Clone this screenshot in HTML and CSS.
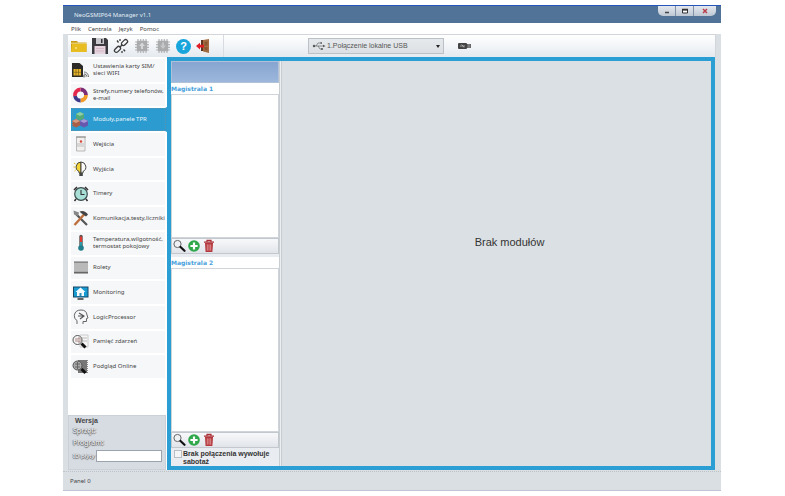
FILE: index.html
```html
<!DOCTYPE html>
<html lang="pl">
<head>
<meta charset="utf-8">
<title>NeoGSMIP64 Manager v1.1</title>
<link rel="stylesheet" href="styles.css">
</head>
<body>
<svg class="defs" aria-hidden="true">
  <symbol id="search" viewBox="0 0 14 14"><circle cx="5.5" cy="5" r="3.6" fill="#eef2f5" stroke="#666" stroke-width="1"/><path d="M8.5 8l4 3.8" stroke="#111" stroke-width="2.2" stroke-linecap="round"/></symbol>
  <symbol id="add" viewBox="0 0 14 14"><circle cx="7" cy="7" r="5.8" fill="#2fa84a"/><path d="M7 3.4v7.2M3.4 7h7.2" stroke="#fff" stroke-width="2.2"/></symbol>
  <symbol id="trash" viewBox="0 0 14 14"><path d="M3 4h8l-.6 9H3.6z" fill="#b5363c"/><path d="M2 3.2h10M5 2.6V1.4h4v1.2" fill="none" stroke="#a92e35" stroke-width="1.2"/><path d="M5.3 5.3v6.4M7 5.3v6.4M8.7 5.3v6.4" stroke="#e9b4b4" stroke-width=".7"/></symbol>
  <symbol id="chip" viewBox="0 0 16 16"><path d="M4 1v14M6.7 1v14M9.3 1v14M12 1v14M1 4h14M1 6.7h14M1 9.3h14M1 12h14" stroke="#b4b5b7" stroke-width="1.2"/><rect x="2.8" y="2.8" width="10.4" height="10.4" rx="1" fill="#aaabad"/></symbol>
</svg>
<div class="window">
  <header class="titlebar">
    <h1>NeoGSMIP64 Manager v1.1</h1>
    <div class="caption">
      <button aria-label="Minimalizuj"><svg viewBox="0 0 12 8"><path d="M4 5.5h4" stroke="#444" stroke-width="1.4"/></svg></button>
      <button aria-label="Maksymalizuj"><svg viewBox="0 0 12 8"><path d="M3.5 3h5v3h-5z" fill="#fff" stroke="#333"/><path d="M3 2.5h6" stroke="#333" stroke-width="1.4"/></svg></button>
      <button aria-label="Zamknij"><svg viewBox="0 0 12 8"><path d="M4 2l4 4M8 2L4 6" stroke="#b8404c" stroke-width="1.5"/></svg></button>
    </div>
  </header>
  <nav class="menu"><a href="#">Plik</a><a href="#">Centrala</a><a href="#">Język</a><a href="#">Pomoc</a></nav>
  <div class="toolbar">
    <div class="tools">
      <button aria-label="Otwórz"><svg viewBox="0 0 16 16"><path d="M0 3h6l1 1.5h8.5V14H0z" fill="#c79a17"/><path d="M1 6h14.5v8H0z" fill="#e7bd22"/><path d="M0 5.2h15.5" stroke="#fff1b0" stroke-width=".8"/><path d="M5 9v2" stroke="#fff3b8"/></svg></button>
      <button aria-label="Zapisz"><svg viewBox="0 0 16 16"><path d="M0 0h14l2 2v14H0z" fill="#3b3a3f"/><path d="M4 0h8v6H4z" fill="#c9c9cd"/><path d="M9 1h1.500v4H9z" fill="#333"/><path d="M2.500 8h11v8h-11z" fill="#e6d3dd"/><path d="M4 10.500h8M4 13h8" stroke="#c4afbb" stroke-width=".7"/></svg></button>
      <button aria-label="Połącz"><svg viewBox="0 0 16 16"><g fill="none" stroke="#3b3b3b" stroke-width="1.3"><rect x="8" y="2.7" width="7" height="3.8" rx="1.9" transform="rotate(-45 11.5 4.6)"/><rect x="1" y="9.5" width="7" height="3.8" rx="1.9" transform="rotate(-45 4.5 11.4)"/><path d="M6.7 9.3l2.6-2.6M4 2.500L5.500 4.500M7 1v2M10.500 11.500l1.600 1.700M9 13v2"/></g></svg></button>
      <button aria-label="Wyślij do centrali"><svg><use href="#chip"/></svg><svg class="over" viewBox="0 0 16 16"><path d="M8 4.500l3 3.500H9v3H7V8H5z" fill="#d6d7d8"/></svg></button>
      <button aria-label="Odczytaj z centrali"><svg><use href="#chip"/></svg><svg class="over" viewBox="0 0 16 16"><path d="M8 11L5 7.500h2v-3h2v3h2z" fill="#c6c7c8"/></svg></button>
      <button class="help" aria-label="Pomoc">?</button>
      <button aria-label="Wyjście"><svg viewBox="0 0 16 16"><path d="M5 2h8v11H5z" fill="#5c341f"/><path d="M7 2l6-1v14l-6-1.500z" fill="#a56d43"/><path d="M8.500 4l3-.5v4l-3 .2zM8.500 9l3 .2v3.400l-3-.6z" fill="#8a5632"/><path d="M0 8l4-3.200v2h4v2.600H4v2z" fill="#e01e25"/></svg></button>
    </div>
    <label class="connection">
      <svg viewBox="0 0 14 10"><path d="M1 5h11M4 5l2-3h3M6 5l2 3h2" fill="none" stroke="#666" stroke-width=".7"/><circle cx="2" cy="5" r="1.2" fill="#555"/><path d="M11 3.800L13.500 5 11 6.200z" fill="#555"/><path d="M8.500 1.200H10v1.600H8.500z" fill="#555"/><circle cx="10" cy="8" r="1" fill="#555"/></svg>
      <select aria-label="Połączenie"><option>1.Połączenie lokalne USB</option></select>
    </label>
    <svg class="plug" viewBox="0 0 14 8"><rect x="0" y="1" width="9" height="6" rx="1" fill="#444"/><path d="M2 4h5M3.500 2.500L5 4 6 5.500" stroke="#ccc" stroke-width=".7" fill="none"/><path d="M9 2h4v4H9z" fill="#666"/><path d="M10.500 3h1M10.500 5h1" stroke="#ddd" stroke-width=".7"/></svg>
  </div>
  <main class="main">
    <aside class="side">
      <nav class="items">
        <a href="#"><svg viewBox="0 0 18 18"><path d="M1 2h7.500L12 5v11H1z" fill="#2d2b28"/><rect x="2.500" y="8" width="7.500" height="6.500" fill="#e6b52a"/><path d="M5 8v6.500M7.500 8v6.500M2.500 11.300H10" stroke="#68501a" stroke-width=".6"/><path d="M13 16a1 1 0 1 1 .1 0M13 12.800q2.500 0 3 3M13 11q4 0 4.600 5" fill="none" stroke="#555" stroke-width=".8"/></svg><span>Ustawienia karty SIM/<br>sieci WIFI</span></a>
        <a href="#"><svg viewBox="0 0 18 18"><g fill="none" stroke-width="3.800"><path d="M9.500 3.500A5.500 5.500 0 0 1 15 9" stroke="#7a2d74"/><path d="M15 9a5.500 5.500 0 0 1-5.500 5.500" stroke="#f39b27"/><path d="M9.500 14.500A5.500 5.500 0 0 1 4 10" stroke="#3e3b8d"/><path d="M4 10a5.500 5.500 0 0 1 5.500-6.500" stroke="#e5294e"/></g></svg><span>Strefy,numery telefonów,<br>e-mail</span></a>
        <a href="#" class="active" aria-current="page"><svg viewBox="0 0 18 18"><path d="M9 1l4 2v4.500L9 9.500 5 7.500V3z" fill="#55a878"/><path d="M9 1l4 2-4 2-4-2z" fill="#8cd0a4"/><path d="M5 8l4 2v4.500l-4 2-4-2V10z" fill="#a95f47"/><path d="M5 8l4 2-4 2-4-2z" fill="#d69b80"/><path d="M13 8l4 2v4.500l-4 2-4-2V10z" fill="#6757ad"/><path d="M13 8l4 2-4 2-4-2z" fill="#a69ad9"/></svg><span>Moduły,panele TPR</span></a>
        <a href="#"><svg viewBox="0 0 18 18"><path d="M5.500 2H14v14H5.500z" fill="#f2f0ee" stroke="#aaa" stroke-width=".8"/><path d="M6 8h8v4H6z" fill="#d7d7d7"/><circle cx="10" cy="6.500" r="1.200" fill="#d3443c"/><path d="M5 2h10" stroke="#888"/></svg><span>Wejścia</span></a>
        <a href="#"><svg viewBox="0 0 18 18"><path d="M10 2a5 5 0 0 0-2 9.500V13h2z" fill="#f4d737" stroke="#333" stroke-width=".9"/><path d="M10 2a5 5 0 0 1 2 9.500V13h-2z" fill="#fafafa" stroke="#333" stroke-width=".9"/><path d="M8.300 13h3.500v3H8.300z" fill="#444"/><path d="M3 3l1.500 1M2.500 7h1.800M3.500 11l1.300-1" stroke="#e2c02b"/></svg><span>Wyjścia</span></a>
        <a href="#"><svg viewBox="0 0 18 18"><path d="M5 14l-1.500 2M15 14l1.500 2M3 5L6 2M17 5L14 2" stroke="#333" stroke-width="1.600"/><circle cx="10" cy="9" r="6.300" fill="#a8dfd7" stroke="#3b4b4b" stroke-width="1.200"/><path d="M10 5v4.500h3.500" fill="none" stroke="#333" stroke-width="1.100"/></svg><span>Timery</span></a>
        <a href="#"><svg viewBox="0 0 18 18"><path d="M5 5l11 11" stroke="#555" stroke-width="2.200"/><path d="M2.500 1.500l.5 4L7 7l1-3.500z" fill="#888"/><path d="M13.500 5L3.500 16" stroke="#bd6f3e" stroke-width="2.400"/><path d="M8.500 2.500q5-2 8.500 3l-2 2L10 4z" fill="#444"/></svg><span>Komunikacja,testy,liczniki</span></a>
        <a href="#"><svg viewBox="0 0 18 18"><path d="M10 2.500v11" stroke="#555" stroke-width="3.400" stroke-linecap="round"/><path d="M10 2.500v5.500" stroke="#df3a31" stroke-width="2.200"/><path d="M10 8v6" stroke="#2f9baa" stroke-width="2.200"/><circle cx="10" cy="14" r="2.800" fill="#207d8b"/></svg><span>Temperatura,wilgotność,<br>termostat pokojowy</span></a>
        <a href="#"><svg viewBox="0 0 18 18"><path d="M3 3h14v12H3z" fill="#aaa"/><path d="M3 5h14M3 7h14M3 9h14M3 11h14" stroke="#c8c8c8"/><path d="M3 3h14M3 13.500h14" stroke="#666"/></svg><span>Rolety</span></a>
        <a href="#"><svg viewBox="0 0 18 18"><path d="M2 2.500h15.500v11H2z" fill="#174666"/><path d="M3 3.500h13.500v9H3z" fill="#189bd1"/><path d="M9.500 3.500l-5 4.500H6v4h7V8h1.500z" fill="#f3fbff"/><path d="M8.500 9h2v3h-2z" fill="#2e8fbd"/><path d="M6.500 15h6" stroke="#333" stroke-width="1.500"/></svg><span>Monitoring</span></a>
        <a href="#"><svg viewBox="0 0 18 18"><path d="M6 16v-3.500Q3 11 3.300 7.500 4 2 10 2q5.500 0 6 5l1 3-1.500.5v3H12V16" fill="none" stroke="#666"/><path d="M8 5l5 3-4 3M7 8h5" fill="none" stroke="#555" stroke-width="1.100"/></svg><span>LogicProcessor</span></a>
        <a href="#"><svg viewBox="0 0 18 18"><path d="M9 2h8v12H9z" fill="#f5f5f5" stroke="#ccc"/><path d="M11 5h5M11 8h5" stroke="#bbb"/><circle cx="6.500" cy="7" r="4.500" fill="#f5f5f5" stroke="#555"/><path d="M5 5v4M7 5h2v4H7z" fill="none" stroke="#a88"/><path d="M10.500 10.500l4 4" stroke="#111" stroke-width="3"/></svg><span>Pamięć zdarzeń</span></a>
        <a href="#"><svg viewBox="0 0 18 18"><path d="M7 2h9v13H7z" fill="#777"/><path d="M16.500 2v13" stroke="#888" stroke-dasharray="1 1"/><circle cx="6.500" cy="7.500" r="4.500" fill="#aaa" stroke="#555"/><path d="M4 6h5M4 9h5M6.500 4v7" stroke="#666"/><path d="M10.500 11l4 4" stroke="#111" stroke-width="3"/></svg><span>Podgląd Online</span></a>
      </nav>
      <section class="version">
        <h2>Wersja</h2>
        <p>Sprzęt:</p>
        <p>Program:</p>
        <div class="board"><label for="board">ID płyty</label><input id="board" type="text"></div>
      </section>
    </aside>
    <section class="frame">
      <div class="buses">
        <div class="head"></div>
        <h2>Magistrala 1</h2>
        <div class="list"></div>
        <div class="actions"><button aria-label="Szukaj"><svg><use href="#search"/></svg></button><button aria-label="Dodaj"><svg><use href="#add"/></svg></button><button aria-label="Usuń"><svg><use href="#trash"/></svg></button></div>
        <h2 class="second">Magistrala 2</h2>
        <div class="list tall"></div>
        <div class="actions"><button aria-label="Szukaj"><svg><use href="#search"/></svg></button><button aria-label="Dodaj"><svg><use href="#add"/></svg></button><button aria-label="Usuń"><svg><use href="#trash"/></svg></button></div>
        <label class="sabotage"><input type="checkbox"><span>Brak połączenia wywołuje sabotaż</span></label>
      </div>
      <div class="splitter"></div>
      <div class="content">Brak modułów</div>
    </section>
  </main>
  <footer class="status">Panel 0</footer>
</div>
</body>
</html>
```
FILE: styles.css
```css
* { box-sizing: border-box; }
body {
  margin: 0;
  height: 100vh;
  padding: 5px 64px 5px 63px;
  background: #fff;
  color: #444;
  font: 6px/8px "Noto Sans", sans-serif;
}
h1, h2, p { margin: 0; font-size: inherit; font-weight: normal; }
button { padding: 0; border: 0; background: none; position: relative; }
a { color: inherit; text-decoration: none; }
.defs { position: absolute; width: 0; height: 0; }
.window {
  height: 100%;
  display: flex;
  flex-direction: column;
  background: #dadfe4;
  border-bottom: 1px solid #c0c4d6;
}
.titlebar {
  flex: 0 0 18px;
  display: flex;
  justify-content: space-between;
  padding: 0 5px 0 11px;
  background: #507397;
  border-top: 1px solid #2455b8;
  color: #e4edf5;
}
.titlebar h1 { align-self: center; }
.caption {
  display: flex;
  height: 10px;
  border-radius: 0 0 5px 5px;
  background: linear-gradient(#e4e8ee, #bdc7d3);
  overflow: hidden;
}
.caption button { width: 18px; border-right: 1px solid #8292a6; }
.caption button:last-child { width: 22px; border: 0; }
.caption svg { width: 12px; height: 8px; display: block; margin: auto; }
.menu {
  flex: 0 0 11px;
  display: flex;
  align-items: center;
  gap: 7px;
  padding-left: 8px;
  background: #fff;
}
.toolbar {
  flex: 0 0 23px;
  display: flex;
  align-items: center;
  margin: 0 5px;
  background: linear-gradient(#fff, #e5eaf0);
  border: 1px solid #d2d6da;
  border-width: 1px 1px 0 0;
}
.tools {
  flex: 0 0 156px;
  height: 100%;
  display: flex;
  align-items: center;
  gap: 5px;
  padding-left: 3px;
  border-right: 1px solid #d8dce0;
}
.tools button { width: 16px; height: 16px; }
.tools svg { display: block; width: 16px; height: 16px; }
.tools .over { position: absolute; inset: 0; }
.tools .help {
  width: 15px;
  height: 15px;
  border-radius: 50%;
  background: #18a5dc;
  color: #fff;
  font: bold 11px/15px "Liberation Sans", sans-serif;
}
.connection {
  display: flex;
  align-items: center;
  gap: 1px;
  width: 136px;
  height: 16px;
  margin-left: 84px;
  padding-left: 3px;
  border: 1px solid #bcc1c7;
  background: linear-gradient(#e6e9ec, #dce0e4);
  position: relative;
}
.connection svg { width: 14px; height: 10px; }
.connection select {
  flex: 1;
  appearance: none;
  border: 0;
  padding: 0;
  background: none;
  color: #555;
  font: 7px/12px "Liberation Sans", sans-serif;
}
.connection::after {
  content: "";
  position: absolute;
  right: 3px;
  top: 6px;
  border: 2px solid transparent;
  border-top: 3px solid #222;
}
.plug { width: 14px; height: 8px; margin-left: 14px; }
.main { flex: 1; display: flex; min-height: 0; margin: 0 6px 0 5px; }
.side {
  flex: 0 0 99px;
  min-width: 0;
  display: flex;
  flex-direction: column;
  background: #fff;
}
.items {
  flex: 1;
  display: grid;
  grid-template-rows: repeat(13, 1fr);
  padding: 1px 0 36px 3px;
}
.items a {
  display: flex;
  align-items: center;
  gap: 4px;
  min-width: 0;
  overflow: hidden;
  background: #f6f7f9;
  border: 1px solid #fff;
  border-width: 1px 2px 1px 0;
  line-height: 7px;
  white-space: nowrap;
}
.items svg { flex: none; width: 18px; height: 18px; }
.items .active {
  background: #2b9bd0;
  color: #e6f4fb;
  border-right-color: #2b9bd0;
  outline: 1px dotted #5a94b3;
  outline-offset: -2px;
}
.version {
  flex: 0 0 55px;
  margin-right: 1px;
  padding: 1px 3px 0 4px;
  background: #d7dce3;
  border: 1px solid #c9d0d7;
  font-size: 7px;
}
.version h2 { padding-left: 2px; font: bold 7px/8px "Liberation Sans", sans-serif; }
.version p, .board label {
  color: #f3f5f7;
  text-shadow: 0 1px 1px #555, 1px 0 1px #777, -1px 0 1px #888;
}
.version p { line-height: 12px; }
.board { display: flex; align-items: center; margin-top: 1px; }
.board label { flex: 0 0 23px; white-space: nowrap; font-size: 6px; }
.board input {
  flex: 1;
  min-width: 0;
  height: 12px;
  padding: 0 2px;
  border: 1px solid #9ca4ad;
  background: #fff;
  font-size: 7px;
}
.frame { flex: 1; min-width: 0; display: flex; border: 4px solid #2b9fd4; background: #dbe0e4; }
.buses { flex: 0 0 108px; display: flex; flex-direction: column; background: #e9ecf0; }
.head { flex: 0 0 22px; background: linear-gradient(#86a5d0, #9db7dc); border: 1px solid #b0c1d8; }
.buses h2 {
  flex: 0 0 11px;
  background: #fff;
  color: #46a0dc;
  font: bold 6px/11px "DejaVu Sans", sans-serif;
}
.buses .second { margin-top: 3px; }
.list { flex: 145; background: #fff; border: 1px solid #d0d5db; }
.tall { flex: 165; }
.actions {
  flex: 0 0 15px;
  display: flex;
  align-items: center;
  gap: 1px;
  background: linear-gradient(#f7f8fa, #e1e5ea);
  border: 1px solid #c3c8ce;
}
.actions button { width: 14px; height: 14px; }
.actions svg { display: block; width: 14px; height: 14px; }
.sabotage {
  flex: 0 0 18px;
  display: flex;
  gap: 1px;
  padding: 2px 2px 0 3px;
  color: #333;
  font: bold 7px/8px "Liberation Sans", sans-serif;
}
.sabotage input {
  appearance: none;
  flex: 0 0 8px;
  height: 8px;
  margin: 0;
  border: 1px solid #b9bec4;
  background: #f3f4f6;
}
.splitter {
  flex: 0 0 3px;
  border-left: 1px solid #c8cdd2;
  border-right: 1px solid #c8cdd2;
  background: #eceff1;
}
.content {
  flex: 1;
  display: grid;
  place-items: center;
  padding: 0 0 44px 26px;
  color: #333;
  font: 11px/14px "Liberation Sans", sans-serif;
}
.status {
  flex: 0 0 19px;
  margin-top: 1px;
  padding-left: 7px;
  border-top: 1px dotted #bcc2c8;
  line-height: 18px;
}
```
